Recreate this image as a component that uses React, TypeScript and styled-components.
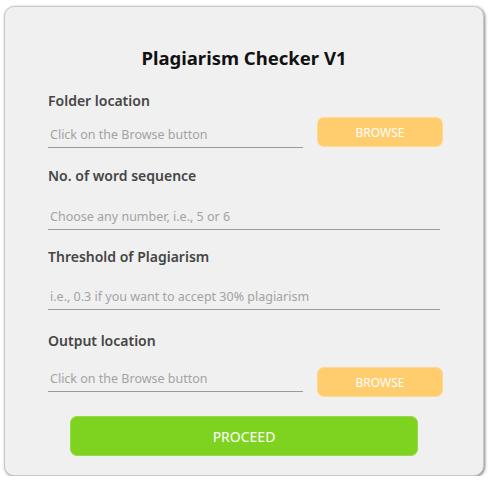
import React from "react";
import styled, { createGlobalStyle } from "styled-components";

const Global = createGlobalStyle`
  html, body { margin: 0; padding: 0; background: #ffffff; }
  body { font-family: "Noto Sans", "Open Sans", sans-serif; }
  * { box-sizing: border-box; }
`;

const Card = styled.div`
  margin: 6px 0 0 4px;
  width: 480px;
  height: 470px;
  background: #f0f0f0;
  border: 1px solid #c9c9c9;
  border-radius: 10px;
  box-shadow: 1px 1px 3px rgba(0, 0, 0, 0.5);
  padding: 39px 40px 0 43px;
  display: flex;
  flex-direction: column;
`;

const Title = styled.h1`
  margin: 0;
  height: 24px;
  line-height: 24px;
  font-size: 18.5px;
  font-weight: 700;
  color: #111;
  text-align: center;
  padding-right: 3px;
`;

const Field = styled.div<{ $top: number; $gap: number }>`
  display: flex;
  flex-direction: column;
  margin-top: ${(p) => p.$top}px;
  gap: ${(p) => p.$gap}px;
`;

const Label = styled.label`
  display: block;
  height: 20px;
  line-height: 20px;
  font-size: 14px;
  font-weight: 600;
  color: #454545;
`;

const Row = styled.div<{ $align: "flex-start" | "flex-end" }>`
  display: flex;
  align-items: ${(p) => p.$align};
  gap: 14px;
`;

const Input = styled.input<{ $full?: boolean }>`
  height: 26px;
  width: ${(p) => (p.$full ? "392px" : "auto")};
  flex: ${(p) => (p.$full ? "none" : "1")};
  min-width: 0;
  border: none;
  border-bottom: 1px solid #9a9a9a;
  background: transparent;
  padding: 0 2px;
  font-family: inherit;
  font-size: 12.5px;
  color: #333;
  outline: none;
  &::placeholder { color: #a3a3a3; }
`;

const BrowseButton = styled.button<{ $offset: "top" | "bottom" }>`
  width: 126px;
  height: 30px;
  margin: ${(p) => (p.$offset === "top" ? "1px 0 0" : "0 0 1px")};
  background: #ffcd6d;
  border: 1px solid #ffd98e;
  border-radius: 7px;
  color: #ffffff;
  font-family: inherit;
  font-size: 12px;
  cursor: pointer;
`;

const ProceedButton = styled.button`
  margin: 19px 0 0 22px;
  width: 348px;
  height: 40px;
  background: #7ed321;
  border: 1px solid #92dc45;
  border-radius: 7px;
  color: #ffffff;
  font-family: inherit;
  font-size: 14px;
  cursor: pointer;
`;

export default function App() {
  return (
    <>
      <Global />
      <Card>
        <Title>Plagiarism Checker V1</Title>
        <Field $top={21} $gap={6}>
          <Label>Folder location</Label>
          <Row $align="flex-end">
            <Input placeholder="Click on the Browse button" />
            <BrowseButton $offset="bottom">BROWSE</BrowseButton>
          </Row>
        </Field>
        <Field $top={18} $gap={18}>
          <Label>No. of word sequence</Label>
          <Input $full placeholder="Choose any number, i.e., 5 or 6" />
        </Field>
        <Field $top={17} $gap={17}>
          <Label>Threshold of Plagiarism</Label>
          <Input $full placeholder="i.e., 0.3 if you want to accept 30% plagiarism" />
        </Field>
        <Field $top={21} $gap={15}>
          <Label>Output location</Label>
          <Row $align="flex-start">
            <Input placeholder="Click on the Browse button" />
            <BrowseButton $offset="top">BROWSE</BrowseButton>
          </Row>
        </Field>
        <ProceedButton>PROCEED</ProceedButton>
      </Card>
    </>
  );
}
